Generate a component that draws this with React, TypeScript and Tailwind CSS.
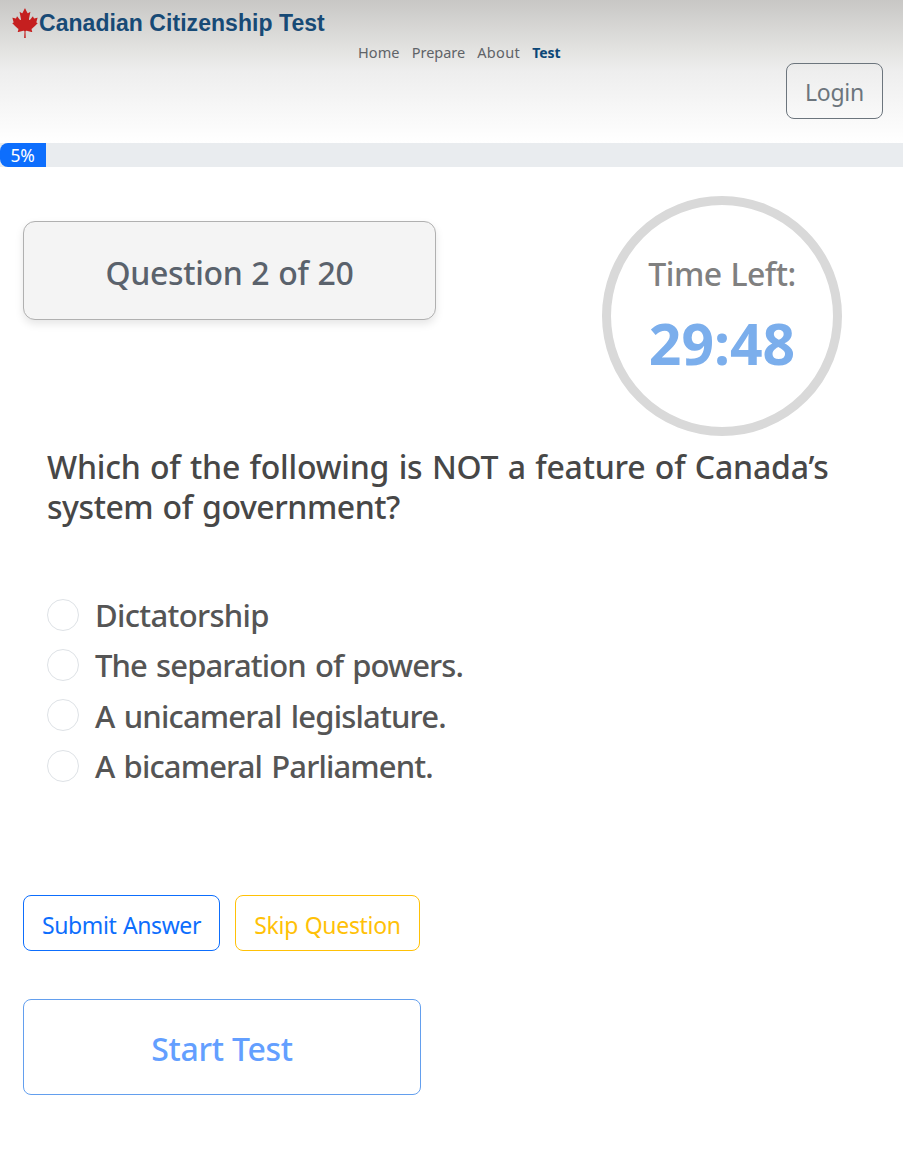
import { FaCanadianMapleLeaf } from "react-icons/fa";

const links = [
  { label: "Home", style: "text-[14.5px] tracking-[0.1px]" },
  { label: "Prepare", style: "text-[14.5px]" },
  { label: "About", style: "text-[14.5px] tracking-[0.35px]" },
];

const options = [
  { text: "Dictatorship", style: "tracking-[-0.67px]" },
  { text: "The separation of powers.", style: "tracking-[-0.9px] [word-spacing:2px]" },
  { text: "A unicameral legislature.", style: "tracking-[-0.82px] [word-spacing:2px]" },
  { text: "A bicameral Parliament.", style: "tracking-[-0.87px] [word-spacing:2px]" },
];

function Header() {
  return (
    <header className="flex h-[143px] flex-col bg-[linear-gradient(to_bottom,#c8c7c5_0%,#e3e3e1_35%,#eeeeee_50%,#ffffff_100%)]">
      <div className="flex h-[44px] items-center pt-0.5 pl-[11px]">
        <FaCanadianMapleLeaf className="mb-px h-[30px] w-[28px] text-[#c51f1f]" preserveAspectRatio="none" />
        <h1 className="mt-px font-['Liberation_Sans',sans-serif] text-[23px] font-bold tracking-[0.05px] text-[#174a76]">
          Canadian Citizenship Test
        </h1>
      </div>
      <nav className="flex h-[19px] items-center gap-3 pb-0.5 pl-[358px] leading-none text-[#5f6368]">
        {links.map((l) => (
          <a key={l.label} className={l.style}>
            {l.label}
          </a>
        ))}
        <a className="text-sm font-bold text-[#0c4777]">Test</a>
      </nav>
      <div className="flex justify-end pr-5">
        <button className="h-14 w-[97px] rounded-lg border border-[#6c757d] pt-[3px] text-[23px] tracking-[-0.3px] text-[#6c757d]">
          Login
        </button>
      </div>
    </header>
  );
}

export default function App() {
  return (
    <div className="min-h-[1150px] bg-white font-['Noto_Sans',sans-serif]">
      <Header />
      <div className="h-6 bg-[#e9ecef]">
        <div className="flex h-6 w-[46px] items-center justify-center rounded-l-lg bg-[#0d6efd] pt-px pr-px text-[17.5px] tracking-[-0.3px] text-white">
          5%
        </div>
      </div>
      <main className="px-[23px] pt-[29px]">
        <div className="flex justify-between pr-[38px]">
          <div className="mt-[25px] flex h-[99px] w-[413px] items-center justify-center rounded-xl border border-[#b0b0b0] bg-[#f4f4f4] pt-1 text-[32px] font-medium tracking-[-0.35px] [word-spacing:1px] text-[#5a626c] shadow-[0_4px_8px_rgba(0,0,0,0.1)]">
            Question 2 of 20
          </div>
          <div className="flex size-60 flex-col items-center rounded-full border-[9px] border-[#d9d9d9] pt-[49px]">
            <div className="text-[32px] leading-[40px] font-medium tracking-[-0.5px] [word-spacing:1px] text-[#808080]">
              Time Left:
            </div>
            <div className="mt-[9px] text-[57px] leading-[80px] font-bold text-[#7baeec]">29:48</div>
          </div>
        </div>
        <section className="px-6 pt-[11px]">
          <h2 className="h-[80px] text-[32px] leading-[40px] font-medium whitespace-nowrap text-[#474747]">
            <span className="block tracking-[-0.2px] [word-spacing:1.3px]">
              Which of the following is NOT a feature of Canada’s
            </span>
            <span className="block tracking-[-0.45px] [word-spacing:1.5px]">system of government?</span>
          </h2>
          <div className="mt-[62.6px] flex flex-col">
            {options.map((o) => (
              <label key={o.text} className="flex h-[50.3px] items-center gap-4 text-[31px] font-medium text-[#555555]">
                <span className="size-8 rounded-full border border-[#dee2e6]" />
                <span className={`pt-px ${o.style}`}>{o.text}</span>
              </label>
            ))}
          </div>
        </section>
        <div className="mt-[103.8px] flex gap-[15px] text-[23px] whitespace-nowrap">
          <button className="h-14 w-[197px] rounded-lg border border-[#0d6efd] pt-[5px] tracking-[-0.4px] [word-spacing:1px] text-[#0d6efd]">
            Submit Answer
          </button>
          <button className="h-14 w-[185px] rounded-lg border border-[#ffc107] pt-[5px] tracking-[-0.3px] [word-spacing:1px] text-[#ffc107]">
            Skip Question
          </button>
        </div>
        <button className="mt-12 h-24 w-[398px] rounded-lg border border-[#639fee] pt-[5px] text-[32px] font-medium tracking-[-0.25px] text-[#639fff]">
          Start Test
        </button>
      </main>
    </div>
  );
}
